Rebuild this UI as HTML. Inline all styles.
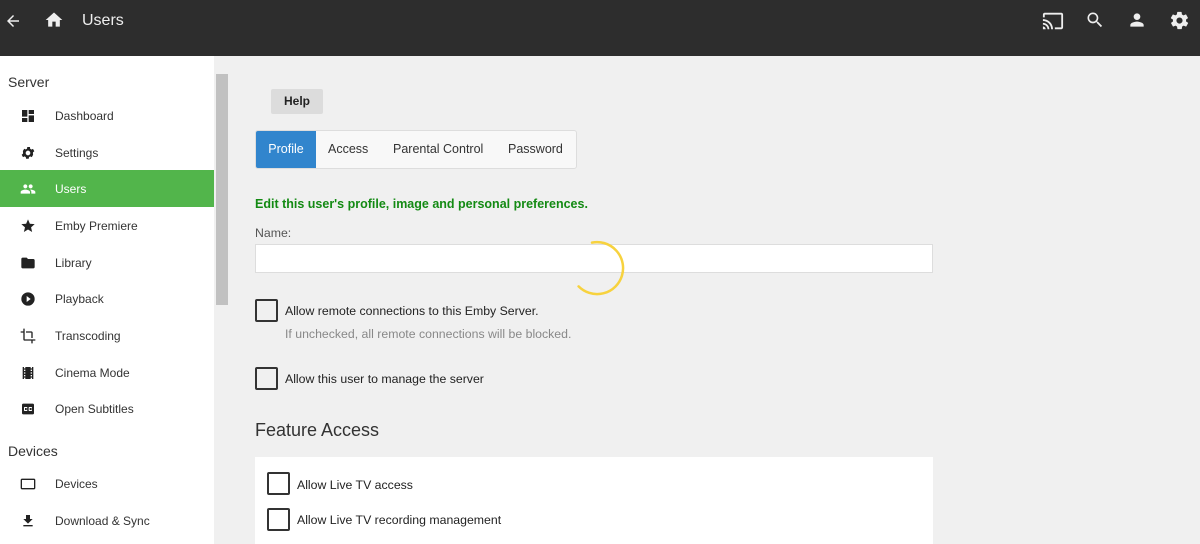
<!DOCTYPE html>
<html><head><meta charset="utf-8"><style>
*{box-sizing:border-box;margin:0;padding:0}
body{width:1200px;height:544px;overflow:hidden;background:#f0f0f0;font-family:"Liberation Sans",Arial,sans-serif;position:relative;color:#222}
.hdr{position:absolute;left:0;top:0;width:1200px;height:56px;background:#2d2d2d}
.hdr .t{position:absolute;left:82px;top:12px;color:#eee;font-size:16px}
.side{position:absolute;left:0;top:56px;width:214px;height:488px;background:#fff}
.sb{position:absolute;left:214px;top:56px;width:16px;height:488px;background:#f0f0f0}
.thumb{position:absolute;left:216px;top:74px;width:12px;height:231px;background:#c1c1c1}
.sec{position:absolute;left:8px;font-size:14px;color:#333}
.it{position:absolute;left:0;width:214px;height:37px;font-size:12px;color:#333}
.it span{position:absolute;left:55px;top:12px}
.it svg{position:absolute;left:20px;top:11px}
.it.act{background:#52b54b;color:#fff}
.help{position:absolute;left:271px;top:89px;width:52px;height:25px;background:#dcdcdc;border-radius:2px;font-weight:bold;font-size:12px;text-align:center;line-height:25px;color:#222}
.tabs{position:absolute;left:255px;top:130px;width:322px;height:39px;background:#f8f8f8;border:1px solid #ddd;border-radius:3px;font-size:12.5px;color:#333}
.tabs div{position:absolute;top:0;height:37px;line-height:37px}
.cb{position:absolute;width:23px;height:23px;border:2px solid #333;border-radius:2px}
.lbl{position:absolute;font-size:12.3px;color:#222}
</style></head><body>
<div class="hdr">
<svg style="position:absolute;left:4px;top:12px" width="18" height="18" viewBox="0 0 24 24"><path d="M20 11H7.8l5.6-5.6L12 4l-8 8 8 8 1.4-1.4L7.8 13H20z" fill="#eee"/></svg>
<svg style="position:absolute;left:44px;top:10px" width="20" height="20" viewBox="0 0 24 24"><path d="M10 20v-6h4v6h5v-8h3L12 3 2 12h3v8z" fill="#eee"/></svg>
<div class="t">Users</div>
<svg style="position:absolute;left:1042px;top:10px" width="22" height="22" viewBox="0 0 24 24"><path d="M21 3H3c-1.1 0-2 .9-2 2v3h2V5h18v14h-7v2h7c1.1 0 2-.9 2-2V5c0-1.1-.9-2-2-2zM1 18v3h3c0-1.7-1.3-3-3-3zm0-4v2c2.8 0 5 2.2 5 5h2c0-3.9-3.1-7-7-7zm0-4v2c5 0 9 4 9 9h2c0-6.1-4.9-11-11-11z" fill="#eee"/></svg>
<svg style="position:absolute;left:1085px;top:10px" width="20" height="20" viewBox="0 0 24 24"><path d="M15.5 14h-.8l-.3-.3c1-1.1 1.6-2.600 1.6-4.2a6.5 6.5 0 1 0-6.5 6.5c1.6 0 3.1-.6 4.2-1.6l.3.3v.8l5 5 1.5-1.5-5-5zm-6 0C7 14 5 12 5 9.5S7 5 9.5 5 14 7 14 9.5 12 14 9.5 14z" fill="#eee"/></svg>
<svg style="position:absolute;left:1127px;top:10px" width="20" height="20" viewBox="0 0 24 24"><path d="M12 12c2.2 0 4-1.8 4-4s-1.8-4-4-4-4 1.8-4 4 1.8 4 4 4zm0 2c-2.7 0-8 1.3-8 4v2h16v-2c0-2.7-5.3-4-8-4z" fill="#eee"/></svg>
<svg style="position:absolute;left:1169px;top:10px" width="21" height="21" viewBox="0 0 24 24"><path d="M19.4 13c0-.3.1-.6.1-1s0-.7-.1-1l2.1-1.6c.2-.2.2-.4.1-.6l-2-3.5c-.1-.2-.4-.3-.6-.2l-2.5 1c-.5-.4-1.100-.7-1.700-1l-.4-2.600c0-.3-.2-.4-.5-.4h-4c-.2 0-.5.2-.5.4l-.4 2.700c-.6.2-1.100.6-1.700 1l-2.500-1c-.2-.1-.5 0-.6.2l-2 3.500c-.1.2-.1.5.1.6L4.6 11c0 .3-.1.6-.1 1s0 .7.1 1l-2.100 1.600c-.2.2-.2.4-.1.6l2 3.500c.1.2.4.3.6.2l2.500-1c.5.4 1.100.7 1.700 1l.4 2.600c0 .2.2.4.5.4h4c.2 0 .5-.2.5-.4l.4-2.600c.6-.3 1.200-.6 1.700-1l2.500 1c.2.1.5 0 .6-.2l2-3.500c.1-.2.1-.5-.1-.6L19.400 13zM12 15.500c-1.900 0-3.500-1.600-3.500-3.500s1.600-3.500 3.500-3.500 3.500 1.600 3.500 3.500-1.600 3.500-3.500 3.500z" fill="#eee"/></svg>
</div>
<div class="side">
<div class="sec" style="top:18px">Server</div>
<div class="it" style="top:41px"><svg width="16" height="16" viewBox="0 0 24 24"><path d="M3 13h8V3H3zm0 8h8v-6H3zm10 0h8V11h-8zm0-18v6h8V3z" fill="#222"/></svg><span>Dashboard</span></div>
<div class="it" style="top:78px"><svg width="16" height="16" viewBox="0 0 24 24"><path d="M19.4 13c0-.3.1-.6.1-1s0-.7-.1-1l2.1-1.6-2-3.5-2.5 1c-.5-.4-1.1-.7-1.7-1L14.9 3h-4l-.4 2.7c-.6.2-1.1.6-1.7 1l-2.5-1-2 3.5L4.6 11c0 .3-.1.6-.1 1s0 .7.1 1l-2.1 1.6 2 3.5 2.5-1c.5.4 1.1.7 1.7 1l.4 2.6h4l.4-2.6c.6-.3 1.2-.6 1.7-1l2.5 1 2-3.5zM12 15.5a3.5 3.5 0 1 1 0-7 3.5 3.5 0 0 1 0 7z" fill="#222"/></svg><span>Settings</span></div>
<div class="it act" style="top:114px"><svg width="16" height="16" viewBox="0 0 24 24"><path d="M16 11c1.7 0 3-1.3 3-3s-1.3-3-3-3-3 1.3-3 3 1.3 3 3 3zm-8 0c1.7 0 3-1.3 3-3S9.7 5 8 5 5 6.3 5 8s1.3 3 3 3zm0 2c-2.3 0-7 1.2-7 3.5V19h14v-2.5C15 14.2 10.3 13 8 13zm8 0c-.3 0-.6 0-1 .1 1.2.8 2 1.9 2 3.4V19h6v-2.5c0-2.3-4.7-3.5-7-3.5z" fill="#fff"/></svg><span>Users</span></div>
<div class="it" style="top:151px"><svg width="16" height="16" viewBox="0 0 24 24"><path d="M12 17.3 18.2 21l-1.6-7L22 9.2l-7.2-.6L12 2 9.2 8.6 2 9.2 7.5 14l-1.7 7z" fill="#222"/></svg><span>Emby Premiere</span></div>
<div class="it" style="top:188px"><svg width="16" height="16" viewBox="0 0 24 24"><path d="M10 4H4c-1.1 0-2 .9-2 2v12c0 1.1.9 2 2 2h16c1.1 0 2-.9 2-2V8c0-1.1-.9-2-2-2h-8z" fill="#222"/></svg><span>Library</span></div>
<div class="it" style="top:224px"><svg width="16" height="16" viewBox="0 0 24 24"><path d="M12 2a10 10 0 1 0 0 20 10 10 0 0 0 0-20zm-2 14.5v-9l6 4.5z" fill="#222"/></svg><span>Playback</span></div>
<div class="it" style="top:261px"><svg width="16" height="16" viewBox="0 0 24 24"><path d="M17 15h2V7c0-1.1-.9-2-2-2H9v2h8zM7 17V1H5v4H1v2h4v10c0 1.1.9 2 2 2h10v4h2v-4h4v-2z" fill="#222"/></svg><span>Transcoding</span></div>
<div class="it" style="top:298px"><svg width="16" height="16" viewBox="0 0 24 24"><path d="M18 3v2h-2V3H8v2H6V3H4v18h2v-2h2v2h8v-2h2v2h2V3zM8 17H6v-2h2zm0-4H6v-2h2zm0-4H6V7h2zm10 8h-2v-2h2zm0-4h-2v-2h2zm0-4h-2V7h2z" fill="#222"/></svg><span>Cinema Mode</span></div>
<div class="it" style="top:334px"><svg width="16" height="16" viewBox="0 0 24 24"><path d="M19 4H5a2 2 0 0 0-2 2v12a2 2 0 0 0 2 2h14a2 2 0 0 0 2-2V6a2 2 0 0 0-2-2zm-8 7H9.5v-.5h-2v3h2V13H11v1a1 1 0 0 1-1 1H7a1 1 0 0 1-1-1v-4a1 1 0 0 1 1-1h3a1 1 0 0 1 1 1zm7 0h-1.5v-.5h-2v3h2V13H18v1a1 1 0 0 1-1 1h-3a1 1 0 0 1-1-1v-4a1 1 0 0 1 1-1h3a1 1 0 0 1 1 1z" fill="#222"/></svg><span>Open Subtitles</span></div>
<div class="sec" style="top:387px">Devices</div>
<div class="it" style="top:409px"><svg width="16" height="16" viewBox="0 0 24 24"><path d="M21 4H3c-1.1 0-2 .9-2 2v12c0 1.1.9 2 2 2h18c1.1 0 2-.9 2-2V6c0-1.1-.9-2-2-2zm0 14H3V6h18z" fill="#222"/></svg><span>Devices</span></div>
<div class="it" style="top:446px"><svg width="16" height="16" viewBox="0 0 24 24"><path d="M19 9h-4V3H9v6H5l7 7zM5 18v2h14v-2z" fill="#222"/></svg><span>Download &amp; Sync</span></div>
</div>
<div class="sb"></div><div class="thumb"></div>
<div class="help">Help</div>
<div class="tabs">
<div style="left:0;width:60px;background:#3185cd;color:#fff;text-align:center;border-radius:2px 0 0 2px">Profile</div>
<div style="left:72px">Access</div>
<div style="left:137px">Parental Control</div>
<div style="left:252px">Password</div>
</div>
<div class="lbl" style="left:255px;top:197px;color:#138a13;font-weight:bold;font-size:12.5px">Edit this user's profile, image and personal preferences.</div>
<div class="lbl" style="left:255px;top:226px;color:#555">Name:</div>
<div style="position:absolute;left:255px;top:244px;width:678px;height:29px;background:#fff;border:1px solid #ddd"></div>
<svg style="position:absolute;left:565px;top:236px" width="64" height="64" viewBox="0 0 64 64"><path d="M27 6.6A26 26 0 1 1 13.6 50.4" fill="none" stroke="#f7d23e" stroke-width="2.5" stroke-linecap="round"/></svg>
<div class="cb" style="left:255px;top:299px"></div>
<div class="lbl" style="left:285px;top:304px">Allow remote connections to this Emby Server.</div>
<div class="lbl" style="left:285px;top:327px;color:#888">If unchecked, all remote connections will be blocked.</div>
<div class="cb" style="left:255px;top:367px"></div>
<div class="lbl" style="left:285px;top:372px">Allow this user to manage the server</div>
<div style="position:absolute;left:255px;top:420px;font-size:18px;color:#333">Feature Access</div>
<div style="position:absolute;left:255px;top:457px;width:678px;height:87px;background:#fff"></div>
<div class="cb" style="left:267px;top:472px"></div>
<div class="lbl" style="left:297px;top:478px">Allow Live TV access</div>
<div class="cb" style="left:267px;top:508px"></div>
<div class="lbl" style="left:297px;top:513px">Allow Live TV recording management</div>
</body></html>
